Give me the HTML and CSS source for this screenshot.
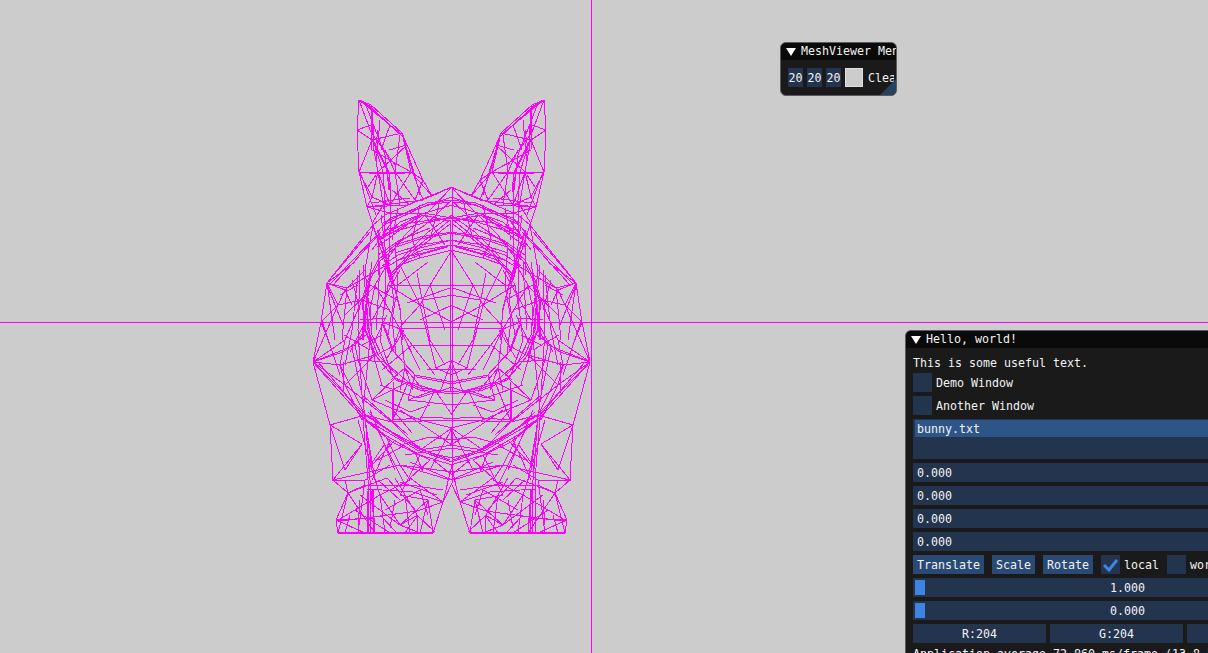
FILE: index.html
```html
<!DOCTYPE html>
<html lang="en">
<head>
  <meta charset="UTF-8" />
  <title>MeshViewer</title>
  <link rel="stylesheet" href="styles.css">
</head>
<body>

  <svg class="scene" width="1208" height="653" viewBox="0 0 1208 653">
    <g class="wire">
      <path d="M0 322.5H1208M591.5 0V653"/>
      <path d="M452.5 187V483M450.5 220V392"/>
      <g id="half">
        <!-- ear -->
        <path d="M359 100L357 130L359 172L367 207L373 225M359 100L371 105L402 133L407 145L423 180L432 196L452 187M359 100L400 133M359 100L372 135M371 105L374 150L378 172L390 205M365 103L385 155L389 190M357 130L371 125L372 150M357 130L372 140L359 172M359 172L411 172M372 150L411 172M372 140L402 133M378 172L407 145M389 150L407 145M385 150L395 172M402 133L411 172L423 180M359 172L372 197L367 207M378 172L372 197L390 205M411 172L390 205M411 172L432 196M423 180L415 200M395 172L415 200M367 207L407 205L432 196M378 172L385 215"/>
        <path d="M362 101L401 135M365 102L403 137M371 105L372 140L387 170L390 190L390 230L388 277M372 110L374 142L389 172L391 192M373 140L383 172L385 200L384 235M402 133L413 173L423 200M404 140L415 176L420 195M400 135L395 172L400 205M359 172L378 174L405 173M367 207L423 200M371 203L410 198"/>
        <path d="M380 120L376 165M373 135L395 165M390 125L381 150M375 150L378 130M360 172L376 215M376 175L366 190M392 190L410 205M386 200L373 222"/>
        <!-- forehead and face rings -->
        <path d="M452 187L420 200L385 215L373 225M452 197L420 208L390 218L375 235M452 205L425 213L400 222L380 240M452 218L423 213L390 213L367 207M452 218L415 222L385 230M452 187L430 210L405 235L385 262M452 200L425 225L395 245M452 215L428 232L400 260M373 225L385 262L390 280M381 215L388 270M378 232L378 275"/>
        <path d="M383 223L427 203L452 200M384 225L427 205L450 202M380 237L423 213L452 218M381 239L423 215L450 221M377 247L423 213M390 233L423 223L452 218M388 277L413 250L450 220M390 277L414 252L450 224M400 260L423 250L452 245M403 261L426 253L447 247M395 253L420 245L452 240M378 255L400 240L430 228M372 250L392 222M398 208L392 240M420 205L412 240L420 258M440 200L430 240M425 215L445 245"/>
        <path d="M452 232L420 237L395 245L378 260L368 280L362 300L365 330L375 355L395 378L420 388L452 392M452 245L423 253L402 258L385 268L375 285L370 310L372 335L385 362L408 382L435 390M452 240L420 248L398 255L382 266M452 250L420 258L400 265L388 285L382 322L392 350L415 375L452 382"/>
        <path d="M453 233L420 239L396 247L379 262L369 282L363 302L366 331L376 356L396 380L420 390L452 394M384 325L394 352L417 377L452 384M366 300L368 330L378 355L398 376"/>
        <path d="M452 250L430 285L388 285M452 285L430 285L420 305L452 322M400 265L420 305L388 285M420 305L398 329M382 322L400 329L452 327M400 329L420 370M420 305L436 368M452 360L436 368L452 375M427 370L452 369M400 329L392 350M375 285L400 329M430 285L445 330"/>
        <path d="M377 230L392 278L400 310L403 340M378 231L393 280L401 312M370 273L363 327L362 340M371 273L364 327L363 340M407 303L450 288M423 300L453 295M417 273L430 340M400 329L405 368L400 390M400 329L435 375M405 368L413 390M405 368L391 380M405 368L425 392M452 360L440 392M387 315L373 345M386 360L404 330M345 315L375 286M372 320L400 270"/>
        <path d="M385 262L385 300L380 340L392 375M380 262L378 300L376 330M395 245L398 285L392 320L396 355M372 262L366 305L372 350L382 385M389 268L394 300L388 335M360 320L385 318M362 345L382 335M362 300L390 310M370 285L397 300M368 360L395 345M382 370L412 345M398 285L428 262M412 345L452 345M420 320L452 305M430 340L445 365"/>
        <!-- cheek -->
        <path d="M373 225L327 283L321 322L313 362L330 425L333 480M327 283L355 262M333 285L381 232M327 283L345 290L365 270M345 290L352 305M327 283L338 305L345 290M338 305L321 322M338 305L362 300M327 283L335 340M321 322L330 345M313 362L345 340L362 300M313 362L338 305M313 362L355 345L365 330M313 362L345 385L340 365L313 362M345 340L340 365L375 355M340 365L365 415M313 362L363 418M318 362L355 405M345 385L375 355M345 385L362 420M345 385L392 422M355 345L358 360L375 355M358 360L385 362M358 360L372 400L395 378M372 400L408 382M372 400L420 420M362 395L408 435"/>
        <path d="M327 283L370 232M330 284L376 236M327 283L347 288L390 263M347 288L342 340M321 318L340 375M327 285L343 325M340 295L358 285M352 280L360 310M358 275L352 330L345 365M313 362L343 352L366 335M315 364L368 417M343 362L343 393M343 392L363 415M352 348L362 395M366 320L350 352M344 335L370 350"/>
        <path d="M373 225L365 270L372 335M360 270L358 330L362 395L372 470M363 265L370 340L362 420M367 207L385 262"/>
        <!-- belly -->
        <path d="M363 418L387 432L417 450L452 462M360 415L385 435L420 455L452 465M365 420L392 442L430 460M330 425L365 415L392 422L452 420M330 425L362 444L345 470M362 444L333 480L365 480L390 465M330 425L345 470M365 415L370 480L375 533M392 422L420 450L452 428M408 382L392 422M435 390L420 420L452 428L452 445L420 450M400 410L452 445M392 390L392 422M415 375L408 400L452 405M408 400L435 390L452 415M333 480L400 465L450 480M400 465L452 472M385 435L400 465L410 480M390 440L372 480M365 480L358 533M420 455L400 495M430 460L410 478L443 502M452 465L443 502M452 428L430 470"/>
        <path d="M363 418L368 480M365 420L375 480M358 420L372 470L380 495M370 410L395 470M375 425L405 485"/>
        <path d="M365 415L388 430L417 448L450 460M368 416L392 432L420 447M368 412L385 428L403 440L430 453L452 458M393 420L433 417L452 419M393 382L393 420M393 410L412 433M380 385L418 398L452 387M385 400L410 412L430 405M400 445L430 437L452 440M405 455L452 448M378 460L405 445M433 460L452 475M415 452L423 472M384 445L367 470M372 465L395 440M410 462L452 480"/>
        <!-- foot -->
        <path d="M333 480L348 493L336 520L338 533L433 533L443 502L452 483M348 493L365 485L410 485L443 490M336 520L348 493L345 480M336 520L375 518M338 520L355 510L380 495L410 480M348 493L375 533M348 493L338 533M336 520L365 533M368 480L368 533M372 490L375 533M380 495L400 525L428 500M380 495L385 533M400 525L420 533L428 500M428 500L433 532M385 510L420 490M400 525L418 515L405 533M418 515L417 533M355 510L390 533M360 495L400 525M400 495L428 500M420 490L428 515"/>
        <path d="M338 532L433 532M338 521L367 518L417 511L443 502M348 493L387 478M367 490L368 533M370 488L371 533M373 490L373 533M387 478L417 512M395 478L417 515L435 532M400 482L437 495M443 502L413 492L367 489M380 515L397 533M390 528L395 500M350 515L345 533M360 500L358 525M405 495L410 533M378 480L400 500"/>
      </g>
      <use href="#half" transform="matrix(-1 0 0 1 903 0)"/>
    </g>
  </svg>

  <div class="win win-menu">
    <div class="title"><span class="arrow"></span><span>MeshViewer Menu</span></div>
    <div class="menu-row">
      <span class="num">20</span>
      <span class="num">20</span>
      <span class="num">20</span>
      <span class="swatch"></span>
      <span>Clear</span>
    </div>
    <div class="grip"></div>
  </div>

  <div class="win win-hello">
    <div class="title"><span class="arrow"></span><span>Hello, world!</span></div>
    <div class="content">
      <div class="line">This is some useful text.</div>
      <div class="check-row"><span class="box"></span><span>Demo Window</span></div>
      <div class="check-row"><span class="box"></span><span>Another Window</span></div>
      <div class="listbox"><div class="selected">bunny.txt</div></div>
      <div class="field">0.000</div>
      <div class="field">0.000</div>
      <div class="field">0.000</div>
      <div class="field">0.000</div>
      <div class="toolbar">
        <span class="btn">Translate</span>
        <span class="btn">Scale</span>
        <span class="btn">Rotate</span>
        <span class="check-row">
          <span class="box">
            <svg width="19" height="19" viewBox="0 0 19 19"><path class="tick" d="M3 10L8 15L16 5"/></svg>
          </span>
          <span>local</span>
        </span>
        <span class="check-row"><span class="box"></span><span>world</span></span>
      </div>
      <div class="slider"><span class="grab"></span>1.000</div>
      <div class="slider"><span class="grab"></span>0.000</div>
      <div class="rgb">
        <span class="chan">R:204</span>
        <span class="chan">G:204</span>
        <span class="chan">B:204</span>
      </div>
      <div class="line">Application average 72.860 ms/frame (13.8 FPS)</div>
    </div>
  </div>

</body>
</html>
```
FILE: styles.css
```css
* { box-sizing: border-box; }

html, body {
  margin: 0;
  padding: 0;
  height: 653px;
  overflow: hidden;
}

body {
  position: relative;
  background: #cccccc;
  color: #f2f2f2;
  font-family: 'DejaVu Sans Mono', monospace;
  font-size: 11.63px;
  line-height: 13px;
}

.scene {
  position: absolute;
  left: 0;
  top: 0;
}

.wire path {
  fill: none;
  stroke: #ff00ff;
  stroke-width: 1;
  shape-rendering: crispEdges;
}

.win {
  position: absolute;
  background: #1a1a1a;
  border: 1px solid #5b5b66;
  border-radius: 6px;
  overflow: hidden;
  white-space: nowrap;
}

.win-menu {
  left: 780px;
  top: 42px;
  width: 117px;
  height: 54px;
}

.win-hello {
  left: 905px;
  top: 330px;
  width: 445px;
  height: 345px;
}

.title {
  height: 17px;
  background: #0a0a0a;
  display: flex;
  align-items: center;
  gap: 5px;
  padding-left: 5px;
}

.arrow {
  width: 0;
  height: 0;
  border-left: 5px solid transparent;
  border-right: 5px solid transparent;
  border-top: 8px solid #fff;
}

.menu-row {
  display: flex;
  gap: 4px;
  width: 106px;
  height: 19px;
  margin: 8px 0 0 7px;
  line-height: 21px;
  overflow: hidden;
}

.num {
  width: 15px;
  height: 19px;
  flex: none;
  background: #23344f;
  text-align: center;
}

.swatch {
  width: 18px;
  height: 19px;
  flex: none;
  background: #cccccc;
  border: 1px solid #e0e0e0;
  margin-right: 1px;
}

.grip {
  position: absolute;
  right: 0;
  bottom: 0;
  width: 16px;
  height: 16px;
  background: #26425f;
  clip-path: polygon(100% 0, 100% 100%, 0 100%);
}

.content {
  display: flex;
  flex-direction: column;
  gap: 4px;
  padding: 8px 7px;
}

.line {
  height: 13px;
  line-height: 15px;
}

.check-row {
  display: flex;
  align-items: flex-start;
  gap: 4px;
  height: 19px;
  line-height: 21px;
}

.box {
  width: 19px;
  height: 19px;
  flex: none;
  background: #23344f;
}

.box svg {
  display: block;
}

.tick {
  fill: none;
  stroke: #3d85e0;
  stroke-width: 3;
}

.listbox {
  height: 40px;
  background: #23344f;
  padding: 1px 2px;
}

.selected {
  height: 17px;
  padding-left: 2px;
  line-height: 19px;
  background: #2e5587;
}

.field {
  height: 19px;
  padding-left: 4px;
  line-height: 21px;
  background: #23344f;
}

.toolbar {
  display: flex;
  gap: 8px;
  height: 19px;
}

.btn {
  height: 19px;
  padding: 0 4px;
  line-height: 21px;
  background: #2a4a76;
}

.slider {
  position: relative;
  height: 19px;
  line-height: 21px;
  text-align: center;
  background: #23344f;
}

.grab {
  position: absolute;
  left: 2px;
  top: 2px;
  width: 10px;
  height: 15px;
  background: #3d85e0;
}

.rgb {
  display: flex;
  gap: 4px;
  height: 19px;
}

.chan {
  width: 133px;
  flex: none;
  line-height: 21px;
  text-align: center;
  background: #23344f;
}
```
